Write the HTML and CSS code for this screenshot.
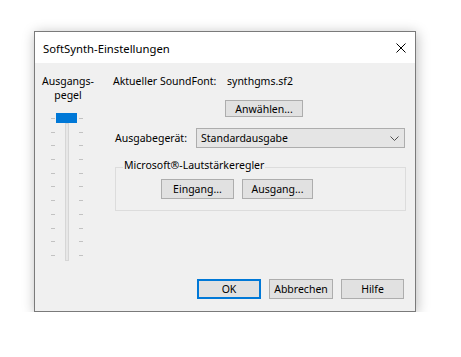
FILE: index.html
```html
<!DOCTYPE html>
<html lang="de">
<head>
<meta charset="utf-8">
<title>SoftSynth-Einstellungen</title>
<link rel="stylesheet" href="styles.css">
</head>
<body>
<div class="window">
  <div class="titlebar">
    <span class="title">SoftSynth-Einstellungen</span>
    <svg class="close" width="10" height="10" viewBox="0 0 10 10"><path d="M0.5 0.5 L9.5 9.5 M9.5 0.5 L0.5 9.5" stroke="#000" stroke-width="1" fill="none"/></svg>
  </div>
  <div class="content">
    <div class="main">
      <div class="left">
        <div class="level-label">Ausgangs-<br>pegel</div>
        <div class="slider">
          <div class="ticks">
            <i></i><i></i><i></i><i></i><i></i><i></i><i></i><i></i><i></i><i></i><i></i>
          </div>
          <div class="track-wrap">
            <div class="track"></div>
            <div class="thumb"></div>
          </div>
          <div class="ticks">
            <i></i><i></i><i></i><i></i><i></i><i></i><i></i><i></i><i></i><i></i><i></i>
          </div>
        </div>
      </div>
      <div class="right">
        <div class="row-font">
          <span class="lbl-font">Aktueller SoundFont:</span>
          <span>synthgms.sf2</span>
        </div>
        <button class="btn btn-select">Anwählen...</button>
        <div class="row-device">
          <span class="lbl-device">Ausgabegerät:</span>
          <div class="combo">
            <span>Standardausgabe</span>
            <svg class="chev" width="9" height="5" viewBox="0 0 9 5"><path d="M0.5 0.5 L4.5 4.5 L8.5 0.5" stroke="#505050" stroke-width="1" fill="none"/></svg>
          </div>
        </div>
        <div class="group">
          <span class="legend">Microsoft®-Lautstärkeregler</span>
          <div class="group-buttons">
            <button class="btn btn-in">Eingang...</button>
            <button class="btn btn-out">Ausgang...</button>
          </div>
        </div>
      </div>
    </div>
    <div class="footer">
      <button class="btn btn-ok">OK</button>
      <button class="btn btn-cancel">Abbrechen</button>
      <button class="btn btn-help">Hilfe</button>
    </div>
  </div>
</div>
</body>
</html>
```
FILE: styles.css
```css
html, body {
  margin: 0;
  padding: 0;
  background: #ffffff;
}
body {
  font-family: "Noto Sans", "Open Sans", sans-serif;
  font-size: 10.5px;
  color: #000;
  padding: 31px 0 0 34px;
}
.window {
  width: 380px;
  height: 279px;
  border: 1px solid #7a7a7a;
  box-shadow: 1px 2px 12px rgba(0, 0, 0, 0.28);
  background: #f0f0f0;
  display: flex;
  flex-direction: column;
}
.titlebar {
  height: 31px;
  background: #ffffff;
  display: flex;
  align-items: center;
  justify-content: space-between;
  padding: 0 9px 0 8px;
}
.title {
  font-size: 11.3px;
  line-height: 15px;
  padding-top: 1px;
}
.close {
  display: block;
  margin-top: 1px;
}
.content {
  flex: 1;
  display: flex;
  flex-direction: column;
  padding-top: 11px;
}
.main {
  display: flex;
}
.left {
  width: 78px;
  flex-shrink: 0;
}
.level-label {
  width: 66px;
  text-align: center;
  line-height: 14px;
  white-space: nowrap;
}
.slider {
  display: flex;
  margin: 11px 0 0 16px;
  height: 148px;
}
.ticks {
  width: 4px;
  display: flex;
  flex-direction: column;
  justify-content: space-between;
  padding: 5px 0 5px;
}
.ticks i {
  display: block;
  height: 1px;
  background: #c2c2c2;
}
.track-wrap {
  width: 24px;
  position: relative;
}
.track {
  width: 2px;
  height: 136px;
  margin: 10px auto 0;
  border: 1px solid #d6d6d6;
  background: #e7e7e7;
}
.thumb {
  position: absolute;
  top: 0;
  left: 1px;
  width: 21px;
  height: 10px;
  background: #0078d7;
}
.right {
  width: 293px;
}
.row-font {
  display: flex;
  line-height: 15px;
  white-space: nowrap;
}
.lbl-font {
  width: 114px;
  flex-shrink: 0;
}
.btn {
  font-family: inherit;
  font-size: 10.5px;
  color: #000;
  background: #e1e1e1;
  border: 1px solid #adadad;
  box-sizing: border-box;
  height: 20px;
  padding: 0;
  margin: 0;
  line-height: 16px;
  display: block;
  white-space: nowrap;
}
.btn-select {
  width: 78px;
  height: 17px;
  line-height: 14px;
  margin: 11px 0 0 112px;
}
.row-device {
  display: flex;
  align-items: center;
  margin-top: 11px;
}
.lbl-device {
  width: 81px;
  margin-left: 2px;
  white-space: nowrap;
}
.combo {
  width: 209px;
  height: 20px;
  box-sizing: border-box;
  border: 1px solid #adadad;
  background: #e5e5e5;
  display: flex;
  align-items: center;
  justify-content: space-between;
  padding: 0 5px 0 4px;
}
.chev {
  display: block;
}
.group {
  margin: 19px 0 0 2px;
  width: 289px;
  height: 42px;
  border: 1px solid #dcdcdc;
}
.legend {
  display: block;
  width: fit-content;
  margin: -10px 0 0 7px;
  padding: 0 1px;
  line-height: 15px;
  background: #f0f0f0;
  white-space: nowrap;
}
.group-buttons {
  display: flex;
  gap: 8px;
  margin: 6px 0 0 45px;
}
.btn-in { width: 73px; }
.btn-out { width: 71px; }
.footer {
  margin-top: auto;
  display: flex;
  justify-content: flex-end;
  gap: 8px;
  padding: 0 11px 12px 0;
}
.btn-ok {
  width: 64px;
  border: 2px solid #0078d7;
}
.btn-cancel { width: 64px; }
.btn-help { width: 63px; }
```
